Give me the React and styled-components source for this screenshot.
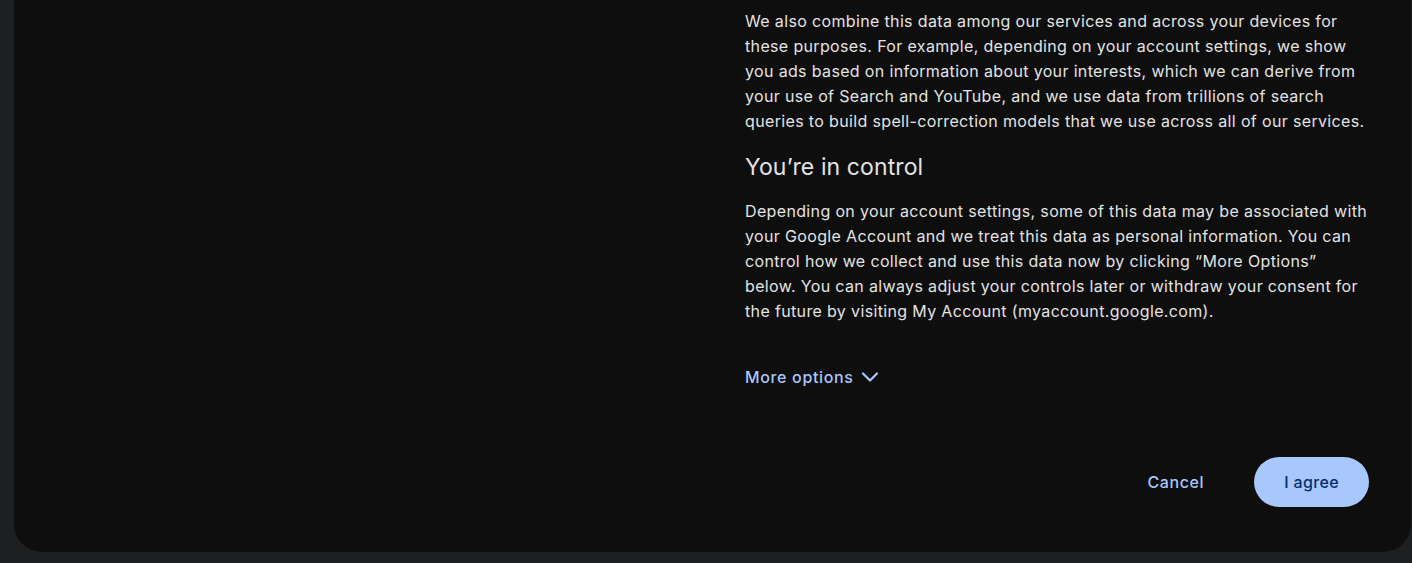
import React from 'react';
import styled, { createGlobalStyle } from 'styled-components';

const GlobalStyle = createGlobalStyle`
  html, body {
    margin: 0;
    padding: 0;
    background: #1e1f20;
  }
  body {
    font-family: Inter, Roboto, "Noto Sans", sans-serif;
  }
`;

const Page = styled.div`
  height: 563px;
  overflow: hidden;
  display: flex;
  flex-direction: column;
  justify-content: flex-end;
  padding: 0 1px 11px 14px;
  box-sizing: border-box;
`;

const Card = styled.div`
  background: #0e0e0e;
  border-radius: 0 0 28px 28px;
  display: grid;
  grid-template-columns: 731px 1fr;
  padding-right: 42px;
  flex-shrink: 0;
`;

const Side = styled.div``;

const Content = styled.div`
  display: flex;
  flex-direction: column;
  color: #e3e3e3;
  padding-top: 40px;
`;

const Para = styled.p`
  margin: 0;
  font-size: 16px;
  line-height: 25px;
  letter-spacing: 0.35px;
`;

const Heading = styled.h2`
  margin: 17px 0 16px;
  font-size: 23px;
  line-height: 32px;
  font-weight: 400;
  color: #e3e3e3;
  letter-spacing: 0.1px;
`;

const MoreButton = styled.button`
  all: unset;
  cursor: pointer;
  margin-top: 41px;
  align-self: flex-start;
  display: flex;
  align-items: center;
  gap: 7px;
  color: #a8c7fa;
  font-size: 16px;
  font-weight: 500;
  line-height: 24px;
  letter-spacing: 0.65px;
  svg {
    display: block;
  }
`;

const Actions = styled.div`
  display: flex;
  justify-content: flex-end;
  align-items: center;
  gap: 26px;
  margin-top: 68px;
  margin-bottom: 45px;
`;

const Button = styled.button`
  all: unset;
  cursor: pointer;
  height: 50px;
  padding: 0 ${(p) => (p.$primary ? '30px' : '24px')};
  border-radius: 25px;
  font-size: 16px;
  font-weight: 500;
  letter-spacing: ${(p) => (p.$primary ? '0.35px' : '0.6px')};
  display: flex;
  align-items: center;
  justify-content: center;
  background: ${(p) => (p.$primary ? '#a8c7fa' : 'transparent')};
  color: ${(p) => (p.$primary ? '#062e6f' : '#a8c7fa')};
`;

function Chevron() {
  return (
    <svg width="18" height="12" viewBox="0 0 18 12" fill="none">
      <path d="M2 2.5l7 7 7-7" stroke="#a8c7fa" strokeWidth="2.2" strokeLinecap="round" strokeLinejoin="round" />
    </svg>
  );
}

export default function App() {
  return (
    <>
      <GlobalStyle />
      <Page>
        <Card>
          <Side />
          <Content>
            <Para>
              We also combine this data among our services and across your devices for these
              purposes. For example, depending on your account settings, we show you ads based on
              information about your interests, which we can derive from your use of Search and
              YouTube, and we use data from trillions of search queries to build spell-correction
              models that we use across all of our services.
            </Para>
            <Heading>You’re in control</Heading>
            <Para>
              Depending on your account settings, some of this data may be associated with your
              Google Account and we treat this data as personal information. You can control how we
              collect and use this data now by clicking “More Options” below. You can always adjust
              your controls later or withdraw your consent for the future by visiting My Account
              (myaccount.google.com).
            </Para>
            <MoreButton>
              More options
              <Chevron />
            </MoreButton>
            <Actions>
              <Button>Cancel</Button>
              <Button $primary>I agree</Button>
            </Actions>
          </Content>
        </Card>
      </Page>
    </>
  );
}
